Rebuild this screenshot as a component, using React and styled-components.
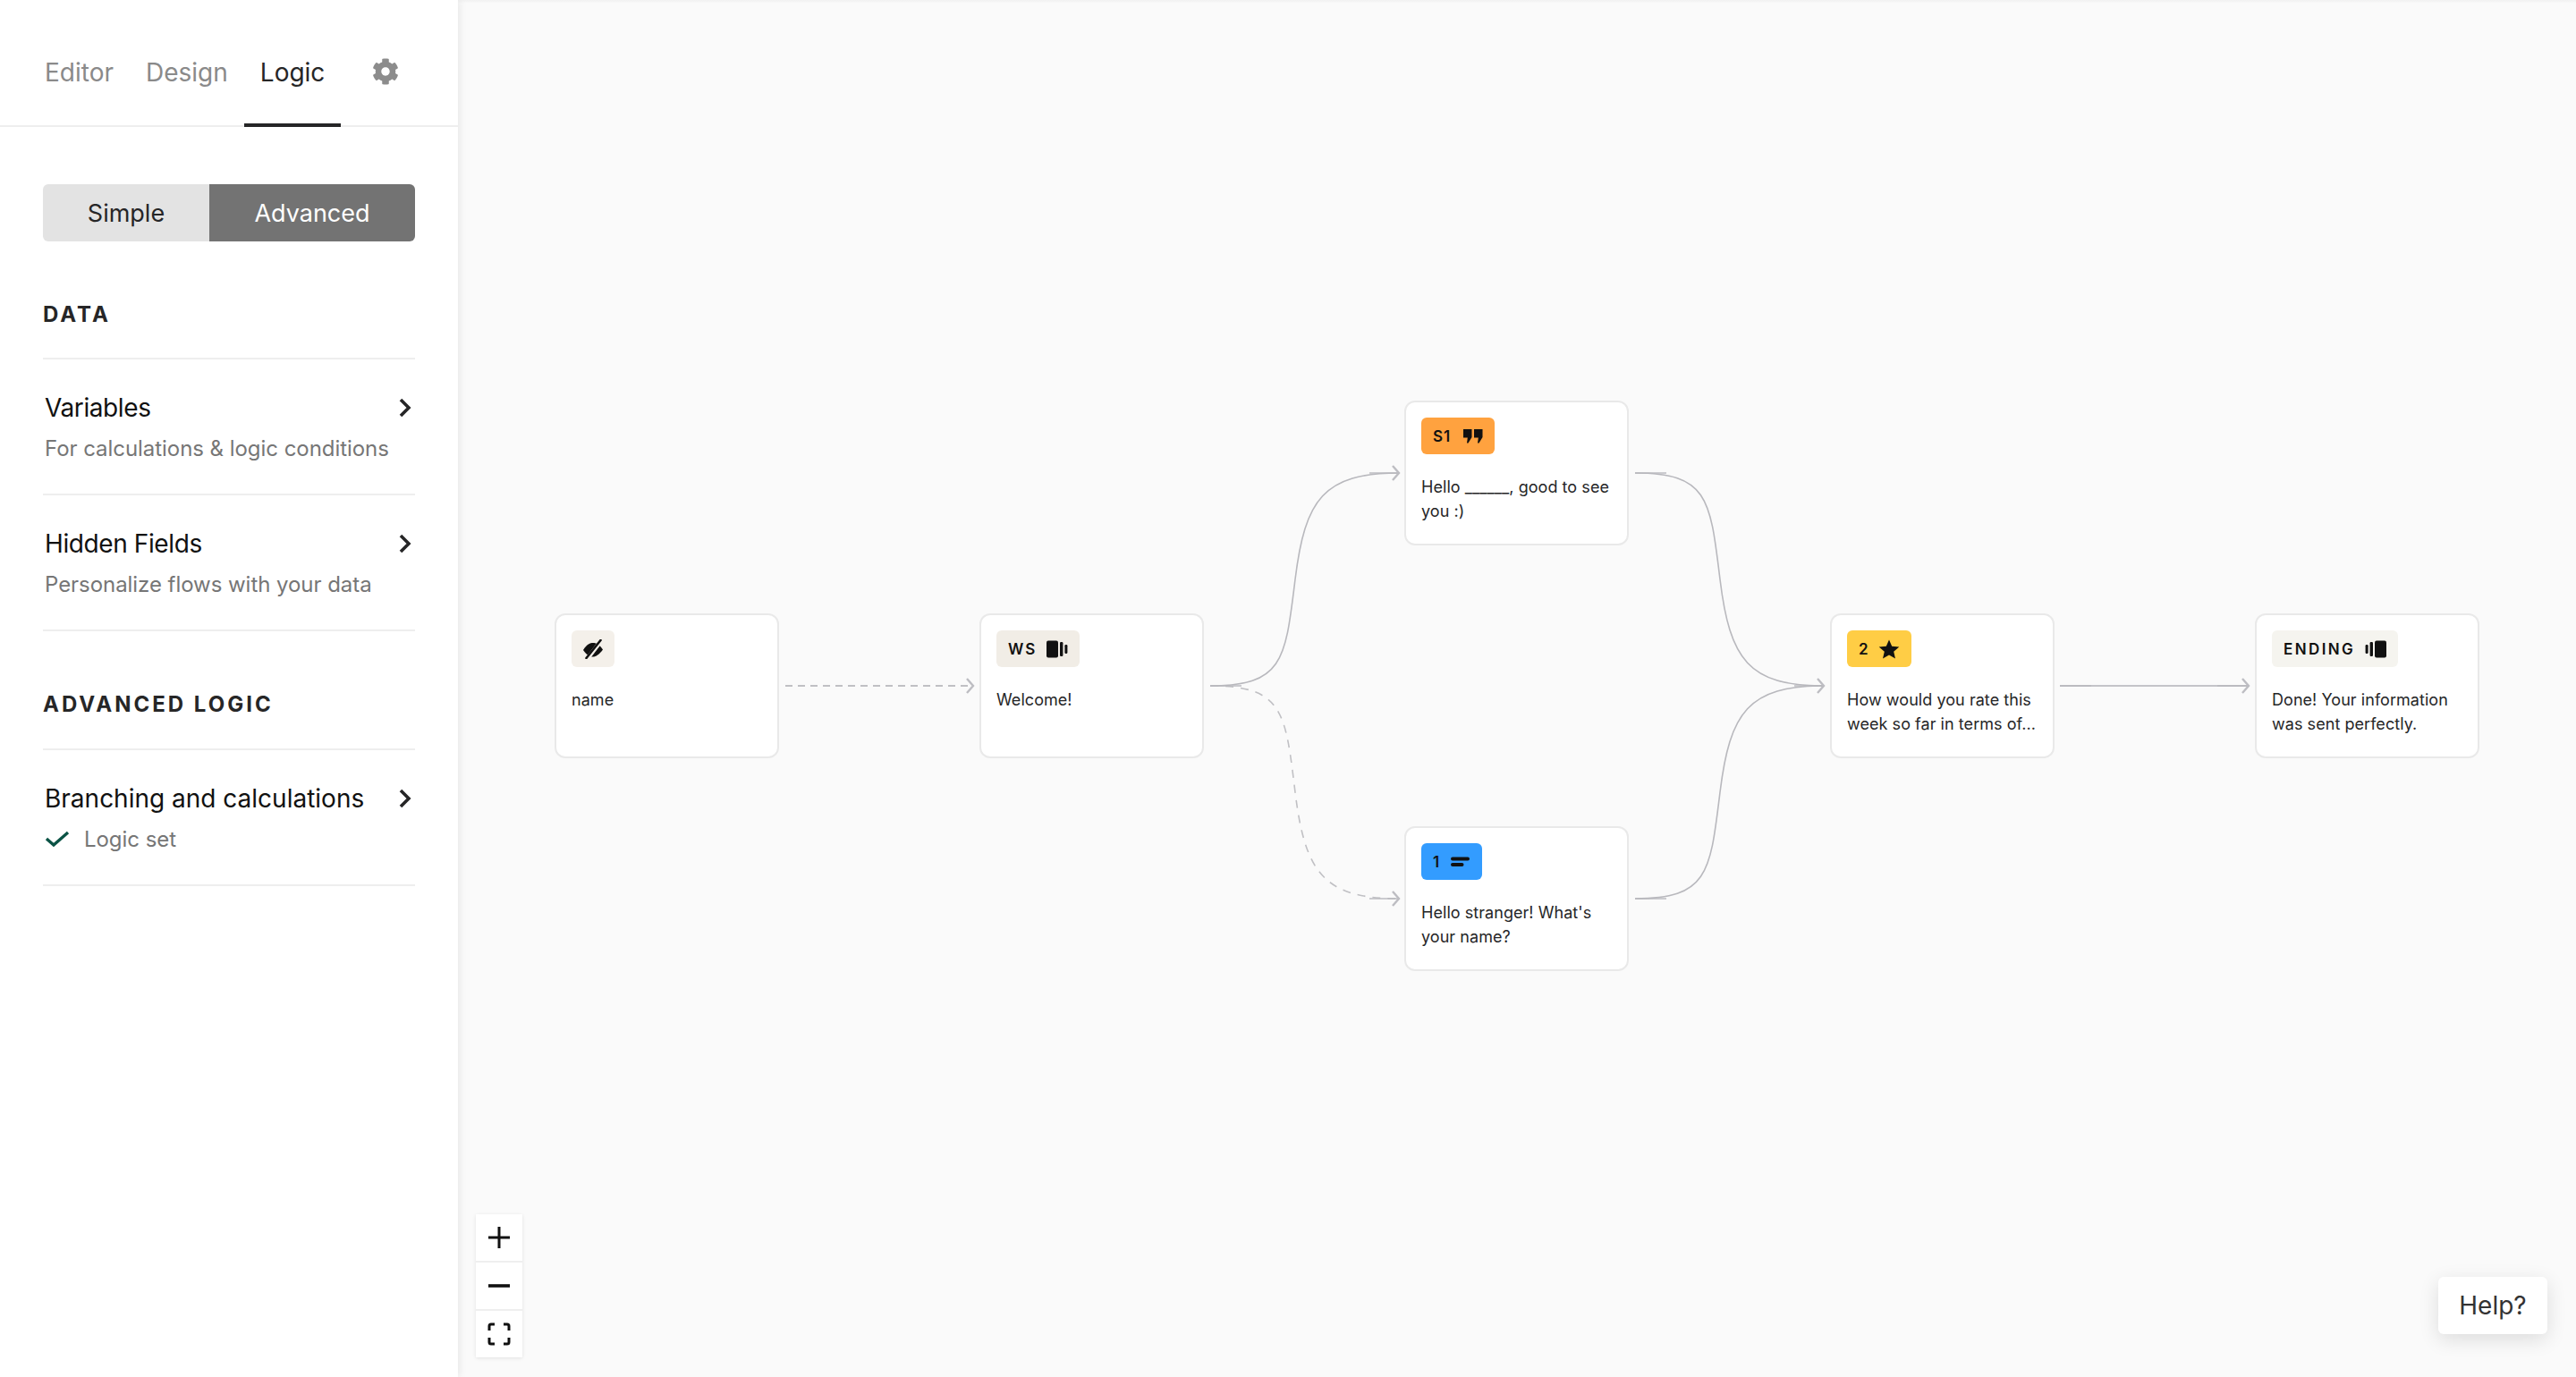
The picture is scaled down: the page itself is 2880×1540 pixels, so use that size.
import React from "react";
import styled, { createGlobalStyle } from "styled-components";
import { FaCog } from "react-icons/fa";

const Global = createGlobalStyle`
  html, body { margin: 0; padding: 0; height: 100%; }
  body { font-family: Inter, "Noto Sans", sans-serif; color: #262627; -webkit-font-smoothing: antialiased; }
`;

const Page = styled.div`
  position: relative;
  display: flex;
  width: 2880px;
  height: 1540px;
  overflow: hidden;
  background: #fafafa;
  &::after {
    content: "";
    position: absolute;
    inset: 0 0 auto 0;
    height: 4px;
    background: linear-gradient(rgba(0,0,0,.035), rgba(0,0,0,0));
    pointer-events: none;
  }
`;

const Sidebar = styled.aside`
  position: relative;
  z-index: 2;
  flex: 0 0 512px;
  display: flex;
  flex-direction: column;
  background: #fff;
  box-shadow: 1px 0 9px rgba(0,0,0,.09);
`;

const Tabs = styled.nav`
  display: flex;
  align-items: flex-start;
  height: 142px;
  padding-left: 32px;
  box-sizing: border-box;
  border-bottom: 2px solid #eeeeee;
`;

const Tab = styled.div`
  display: flex;
  align-items: center;
  height: 142px;
  box-sizing: border-box;
  padding: 23px 18px 0;
  font-size: 28px;
  color: ${p => (p.$active ? "#262627" : "#8a8a8a")};
  border-bottom: 4px solid ${p => (p.$active ? "#262627" : "transparent")};
`;

const GearTab = styled.div`
  display: flex;
  align-items: center;
  height: 142px;
  padding: 18px 0 0 35px;
  box-sizing: border-box;
  color: #8c8c8c;
  font-size: 30px;
`;

const Body = styled.div`
  display: flex;
  flex-direction: column;
  padding: 64px 48px 0;
`;

const Toggle = styled.div`
  display: flex;
  height: 64px;
  border-radius: 6px;
  overflow: hidden;
  font-size: 27px;
`;

const ToggleItem = styled.div`
  display: flex;
  align-items: center;
  justify-content: center;
  width: ${p => p.$w}px;
  background: ${p => (p.$on ? "#737373" : "#e3e3e3")};
  color: ${p => (p.$on ? "#ffffff" : "#262627")};
`;

const Heading = styled.h3`
  margin: ${p => p.$top}px 0 0;
  height: 48px;
  display: flex;
  align-items: center;
  font-size: 24px;
  font-weight: 700;
  letter-spacing: 3px;
  color: #262627;
  line-height: 1;
`;

const List = styled.div`
  margin-top: ${p => p.$top}px;
  border-top: 2px solid #eeeeee;
`;

const Row = styled.div`
  box-sizing: border-box;
  height: 152px;
  padding: 36px 0 0 2px;
  border-bottom: 2px solid #eeeeee;
`;

const RowTop = styled.div`
  display: flex;
  align-items: center;
  justify-content: space-between;
  height: 36px;
  font-size: 28px;
  letter-spacing: ${p => p.$ls}px;
  color: #111;
`;

const Chevron = styled.svg`
  width: 14px;
  height: 24px;
  margin-right: 4px;
  fill: none;
  stroke: #262627;
  stroke-width: 3.6;
`;

const RowSub = styled.div`
  display: flex;
  align-items: center;
  gap: 16px;
  margin-top: 9px;
  height: 36px;
  font-size: 24px;
  letter-spacing: -0.05px;
  color: #767676;
`;

const Canvas = styled.main`
  position: relative;
  flex: 1;
`;

const Edges = styled.svg`
  position: absolute;
  inset: 0;
  width: 2368px;
  height: 1540px;
`;

const Card = styled.div`
  position: absolute;
  left: ${p => p.$x - 512}px;
  top: ${p => p.$y}px;
  box-sizing: border-box;
  width: 251px;
  height: 162px;
  padding: 17px 17px;
  background: #fff;
  border: 2px solid #e9e9e9;
  border-radius: 12px;
`;

const Badge = styled.div`
  display: inline-flex;
  align-items: center;
  gap: ${p => p.$gap}px;
  box-sizing: border-box;
  height: 41px;
  padding: 0 ${p => p.$pad}px;
  border-radius: 6px;
  background: ${p => p.$bg};
  color: #111;
  font-size: 17px;
  font-weight: 600;
  letter-spacing: ${p => p.$ls}px;
`;

const CardText = styled.p`
  margin: 23px 0 0;
  font-size: 18px;
  line-height: 27px;
  letter-spacing: 0.05px;
  color: #262627;
`;

const Zoom = styled.div`
  position: absolute;
  left: 20px;
  bottom: 22px;
  display: flex;
  flex-direction: column;
  gap: 2px;
  background: #efefef;
  box-shadow: 0 1px 4px rgba(0,0,0,.1);
`;

const ZoomButton = styled.div`
  display: flex;
  align-items: center;
  justify-content: center;
  width: 52px;
  height: 52px;
  background: #fff;
`;

const Help = styled.div`
  position: absolute;
  right: 32px;
  bottom: 48px;
  display: flex;
  align-items: center;
  justify-content: center;
  width: 122px;
  height: 64px;
  background: #fff;
  border-radius: 6px;
  font-size: 28px;
  color: #333;
  box-shadow: 0 6px 22px rgba(0,0,0,.12);
`;

const EDGE = "#b8b8bd";

function curve(x0, y0, x1, y1) {
  const d = y1 > y0 ? 1 : -1;
  return `M${x0} ${y0} C${x0 + 82} ${y0} ${x0 + 84} ${y0 + d * 29} ${x0 + 95} ${y0 + d * 119} C${x0 + 106} ${y0 + d * 209} ${x0 + 127} ${y0 + d * 238} ${x1} ${y1}`;
}

const Head = ({ x, y }) => (
  <path d={`M${x - 9} ${y - 8} L${x - 2} ${y} L${x - 9} ${y + 8}`} fill="none" stroke="#bdbdc2" strokeWidth="2.4" />
);

const Stub = ({ x0, x1, y }) => (
  <path d={`M${x0} ${y} H${x1}`} stroke={EDGE} strokeWidth="2" opacity=".7" />
);

const EyeOff = () => (
  <svg width="24" height="22" viewBox="0 0 24 22">
    <path d="M1 12 C5 5.5 9 4 12 4 C15 4 19 5.5 23 11.5 C19 17 15 19.5 12 19.5 C9 19.5 5 18 1 12Z" fill="#111" />
    <path d="M5.5 22 L21.5 1" stroke="#f4f0ea" strokeWidth="4.6" />
    <path d="M4.5 21 L20.5 1" stroke="#111" strokeWidth="2.6" strokeLinecap="round" />
  </svg>
);

const Screen = ({ flip }) => (
  <svg width="24" height="20" viewBox="0 0 24 20" style={flip ? { transform: "scaleX(-1)" } : undefined}>
    <rect x="0" y="0.5" width="13" height="19" rx="2" fill="#111" />
    <rect x="15" y="2" width="3.4" height="16" rx="1.2" fill="#111" />
    <rect x="20.4" y="5" width="3" height="10" rx="1.2" fill="#111" />
  </svg>
);

const Quote = () => (
  <svg width="22" height="16" viewBox="0 0 22 16">
    <path d="M0 0 H9.5 V9 L5.5 15.5 H4 L4.8 9.5 H0 Z M12 0 H21.5 V9 L17.5 15.5 H16 L16.8 9.5 H12 Z" fill="#111" />
  </svg>
);

const Lines = () => (
  <svg width="22" height="12" viewBox="0 0 22 12">
    <rect x="0" y="0.5" width="21" height="4" rx="2" fill="#111" />
    <rect x="0" y="7" width="14.5" height="4" rx="2" fill="#111" />
  </svg>
);

const Star = () => (
  <svg width="24" height="22" viewBox="0 0 24 22">
    <path d="M12 0.5 L15.2 7.7 L23.3 8.5 L17.2 13.8 L19 21.5 L12 17.5 L5 21.5 L6.8 13.8 L0.7 8.5 L8.8 7.7 Z" fill="#111" />
  </svg>
);

const Chev = () => (
  <Chevron viewBox="0 0 14 24">
    <path d="M2 3 L11 12 L2 21" />
  </Chevron>
);

const Check = () => (
  <svg width="28" height="20" viewBox="0 0 28 20">
    <path d="M2 10 L10 17 L26 3" fill="none" stroke="#0b5345" strokeWidth="3.4" />
  </svg>
);

export default function App() {
  return (
    <Page>
      <Global />
      <Sidebar>
        <Tabs>
          <Tab>Editor</Tab>
          <Tab>Design</Tab>
          <Tab $active>Logic</Tab>
          <GearTab><FaCog /></GearTab>
        </Tabs>
        <Body>
          <Toggle>
            <ToggleItem $w={186}>Simple</ToggleItem>
            <ToggleItem $w={230} $on>Advanced</ToggleItem>
          </Toggle>
          <Heading $top={58}>DATA</Heading>
          <List $top={24}>
            <Row>
              <RowTop $ls={-0.4}>Variables<Chev /></RowTop>
              <RowSub>For calculations &amp; logic conditions</RowSub>
            </Row>
            <Row>
              <RowTop $ls={-0.4}>Hidden Fields<Chev /></RowTop>
              <RowSub>Personalize flows with your data</RowSub>
            </Row>
          </List>
          <Heading $top={58}>ADVANCED LOGIC</Heading>
          <List $top={25}>
            <Row>
              <RowTop $ls={0}>Branching and calculations<Chev /></RowTop>
              <RowSub><Check />Logic set</RowSub>
            </Row>
          </List>
        </Body>
      </Sidebar>

      <Canvas>
        <Edges viewBox="512 0 2368 1540">
          <g fill="none" stroke={EDGE} strokeWidth="1.6">
            <path d="M878 767 H1088" strokeDasharray="8 6" stroke="#c0c0c4" strokeWidth="2" />
            <path d={curve(1353, 767, 1564, 529)} />
            <path d={curve(1353, 767, 1564, 1005)} strokeDasharray="9 8" stroke="#c0c0c4" />
            <path d={curve(1828, 529, 2039, 767)} />
            <path d={curve(1828, 1005, 2039, 767)} />
            <path d="M2303 767 H2514" strokeWidth="2" stroke="#c4c4c8" />
          </g>
          <Stub x0={1353} x1={1388} y={767} />
          <Stub x0={1531} x1={1564} y={529} />
          <Stub x0={1531} x1={1564} y={1005} />
          <Stub x0={1828} x1={1863} y={529} />
          <Stub x0={1828} x1={1863} y={1005} />
          <Stub x0={2006} x1={2039} y={767} />
          <Stub x0={2303} x1={2338} y={767} />
          <Stub x0={2479} x1={2514} y={767} />
          <Head x={1090} y={767} />
          <Head x={1566} y={529} />
          <Head x={1566} y={1005} />
          <Head x={2041} y={767} />
          <Head x={2516} y={767} />
        </Edges>

        <Card $x={620} $y={686}>
          <Badge $bg="#f4f0ea" $pad={12} $gap={0} $ls={0}><EyeOff /></Badge>
          <CardText>name</CardText>
        </Card>
        <Card $x={1095} $y={686}>
          <Badge $bg="#f1ede6" $pad={13} $gap={11} $ls={2}>WS<Screen /></Badge>
          <CardText>Welcome!</CardText>
        </Card>
        <Card $x={1570} $y={448}>
          <Badge $bg="#ffa23f" $pad={13} $gap={14} $ls={1}>S1<Quote /></Badge>
          <CardText>Hello ______, good to see you :)</CardText>
        </Card>
        <Card $x={1570} $y={924}>
          <Badge $bg="#339cff" $pad={13} $gap={13} $ls={0}>1<Lines /></Badge>
          <CardText>Hello stranger! What's your name?</CardText>
        </Card>
        <Card $x={2046} $y={686}>
          <Badge $bg="#ffcd45" $pad={13} $gap={11} $ls={0}>2<Star /></Badge>
          <CardText>How would you rate this week so far in terms of...</CardText>
        </Card>
        <Card $x={2521} $y={686}>
          <Badge $bg="#f5f4ef" $pad={13} $gap={11} $ls={2.4}>ENDING<Screen flip /></Badge>
          <CardText>Done! Your information was sent perfectly.</CardText>
        </Card>

        <Zoom>
          <ZoomButton>
            <svg width="26" height="26" viewBox="0 0 26 26"><path d="M13 1 V25 M1 13 H25" stroke="#111" strokeWidth="3" /></svg>
          </ZoomButton>
          <ZoomButton>
            <svg width="26" height="6" viewBox="0 0 26 6"><path d="M1 3 H25" stroke="#111" strokeWidth="3.6" /></svg>
          </ZoomButton>
          <ZoomButton>
            <svg width="26" height="26" viewBox="0 0 26 26">
              <path d="M2 9 V4 Q2 2 4 2 H8 M18 2 H22 Q24 2 24 4 V9 M24 17 V22 Q24 24 22 24 H18 M8 24 H4 Q2 24 2 22 V17" fill="none" stroke="#111" strokeWidth="3" />
            </svg>
          </ZoomButton>
        </Zoom>
        <Help>Help?</Help>
      </Canvas>
    </Page>
  );
}
